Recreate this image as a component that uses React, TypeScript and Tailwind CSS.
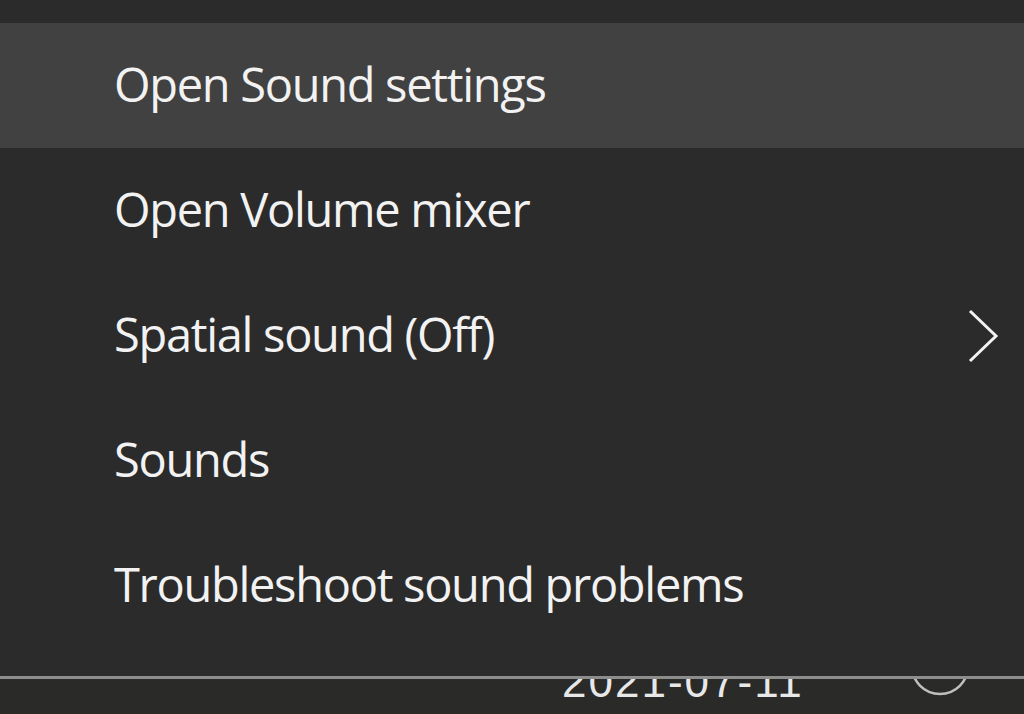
const items = [
  { label: "Open Sound settings", active: true },
  { label: "Open Volume mixer" },
  { label: "Spatial sound (Off)", sub: true },
  { label: "Sounds" },
  { label: "Troubleshoot sound problems" },
];

export default function App() {
  return (
    <div className="w-[1024px] h-[714px] overflow-hidden bg-[#2a2b28] flex flex-col font-['Open_Sans',sans-serif]">
      <div className="bg-[#2b2b2b] pt-[23px] h-[679px] shrink-0 border-b-[3px] border-[#8d8d8d]">
        {items.map((it) => (
          <div
            key={it.label}
            className={
              "h-[125px] flex items-center pl-[114px] pr-[24px] text-[#f2f2f2] text-[47px] tracking-[-1.3px] " +
              (it.active ? "bg-[#414141]" : "")
            }
          >
            <span className="flex-1 -mt-[3px]">{it.label}</span>
            {it.sub && (
              <svg width="34" height="56" viewBox="0 0 34 56">
                <path d="M4 3 L30 28 L4 53" fill="none" stroke="#f2f2f2" strokeWidth="3" />
              </svg>
            )}
          </div>
        ))}
      </div>
      <div className="relative flex-1 overflow-hidden">
        <div className="absolute left-[562px] top-[-30px] text-[44px] text-[#e8e8e8] tracking-[2px] font-['Liberation_Sans',sans-serif]">
          2021-07-11
        </div>
        <svg width="64" height="64" viewBox="0 0 64 64" className="absolute left-[908px] top-[-45px]">
          <circle cx="32" cy="32" r="28" fill="none" stroke="#bfbfbf" strokeWidth="2.5" />
        </svg>
      </div>
    </div>
  );
}
